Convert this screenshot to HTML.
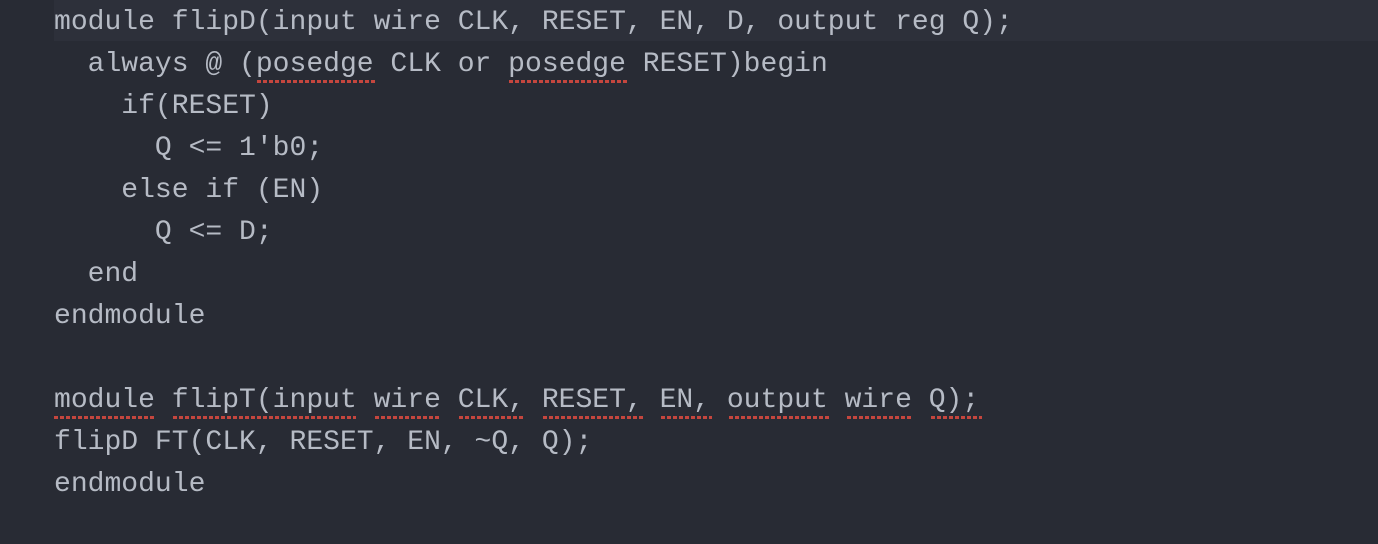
<!DOCTYPE html>
<html><head><style>
html,body{margin:0;padding:0;width:1378px;height:544px;background:#282b34;overflow:hidden}
.hl{position:absolute;left:54px;top:0;width:1324px;height:41px;background:#2d303a}
pre{position:absolute;left:54px;top:2px;margin:0;font-family:"Liberation Mono",monospace;font-size:28.04px;line-height:42px;color:#b6bbc5}
.u{position:absolute;height:3px;background:repeating-linear-gradient(90deg,#c4463e 0 4px,transparent 4px 6px)}
</style></head><body>
<div class="hl"></div>
<pre>module flipD(input wire CLK, RESET, EN, D, output reg Q);
  always @ (posedge CLK or posedge RESET)begin
    if(RESET)
      Q &lt;= 1'b0;
    else if (EN)
      Q &lt;= D;
  end
endmodule

module flipT(input wire CLK, RESET, EN, output wire Q);
flipD FT(CLK, RESET, EN, ~Q, Q);
endmodule</pre>
<div class="u" style="left:257px;top:80px;width:118px"></div>
<div class="u" style="left:509px;top:80px;width:119px"></div>
<div class="u" style="left:54px;top:416px;width:101px"></div>
<div class="u" style="left:173px;top:416px;width:183px"></div>
<div class="u" style="left:375px;top:416px;width:66px"></div>
<div class="u" style="left:459px;top:416px;width:66px"></div>
<div class="u" style="left:543px;top:416px;width:101px"></div>
<div class="u" style="left:661px;top:416px;width:51px"></div>
<div class="u" style="left:729px;top:416px;width:100px"></div>
<div class="u" style="left:847px;top:416px;width:66px"></div>
<div class="u" style="left:931px;top:416px;width:51px"></div>
</body></html>
